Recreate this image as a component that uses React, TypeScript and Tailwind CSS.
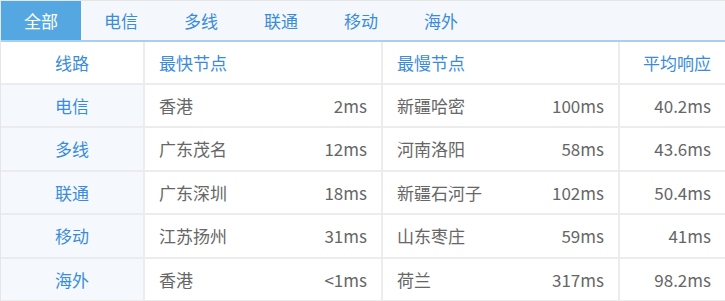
import React, { useState } from 'react'

const tabs = ['全部', '电信', '多线', '联通', '移动', '海外']

const rows = [
  { line: '电信', fast: '香港', fastMs: '2ms', slow: '新疆哈密', slowMs: '100ms', avg: '40.2ms' },
  { line: '多线', fast: '广东茂名', fastMs: '12ms', slow: '河南洛阳', slowMs: '58ms', avg: '43.6ms' },
  { line: '联通', fast: '广东深圳', fastMs: '18ms', slow: '新疆石河子', slowMs: '102ms', avg: '50.4ms' },
  { line: '移动', fast: '江苏扬州', fastMs: '31ms', slow: '山东枣庄', slowMs: '59ms', avg: '41ms' },
  { line: '海外', fast: '香港', fastMs: '<1ms', slow: '荷兰', slowMs: '317ms', avg: '98.2ms' },
]

export default function App() {
  const [active, setActive] = useState(0)

  return (
    <div
      className="w-[725px] h-[301px] bg-white border-l border-t border-[#e6e6e6] overflow-hidden text-[17px]"
      style={{ fontFamily: '"Noto Sans CJK SC", "Noto Sans", sans-serif' }}
    >
      <div className="flex h-[41px] bg-[#f4f8fc] border-b-2 border-[#a7cfef]">
        {tabs.map((t, i) => (
          <button
            key={t}
            onClick={() => setActive(i)}
            className={
              i === active
                ? 'w-[80px] h-[39px] flex items-center justify-center bg-[#55a7e2] text-white'
                : 'w-[80px] h-[39px] flex items-center justify-center text-[#3a8cda]'
            }
          >
            {t}
          </button>
        ))}
      </div>

      <div className="grid grid-cols-[144px_238px_237px_1fr] h-[43px] border-b-2 border-[#ececec] text-[#3a8cda]">
        <div className="flex items-center justify-center border-r-2 border-[#ececec]">线路</div>
        <div className="flex items-center pl-[14px] border-r-2 border-[#ececec]">最快节点</div>
        <div className="flex items-center pl-[14px] border-r-2 border-[#ececec]">最慢节点</div>
        <div className="flex items-center justify-end pr-[14px]">平均响应</div>
      </div>

      {rows.map((r) => (
        <div
          key={r.line}
          className="grid grid-cols-[144px_238px_237px_1fr] h-[43.4px] border-b-2 border-[#ececec] text-[#666]"
        >
          <div className="flex items-center justify-center bg-[#f5f9fd] text-[#3a8cda] border-r-2 border-[#ececec]">
            {r.line}
          </div>
          <div className="flex items-center justify-between px-[14px] border-r-2 border-[#ececec]">
            <span>{r.fast}</span>
            <span>{r.fastMs}</span>
          </div>
          <div className="flex items-center justify-between px-[14px] border-r-2 border-[#ececec]">
            <span>{r.slow}</span>
            <span>{r.slowMs}</span>
          </div>
          <div className="flex items-center justify-end pr-[14px]">{r.avg}</div>
        </div>
      ))}
    </div>
  )
}
